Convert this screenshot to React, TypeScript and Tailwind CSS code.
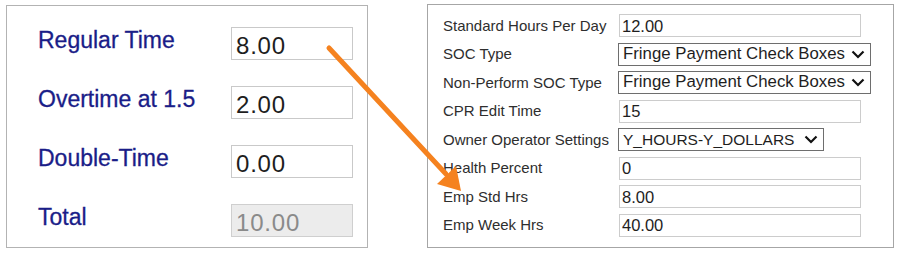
const leftRows = [
  { label: "Regular Time", value: "8.00" },
  { label: "Overtime at 1.5", value: "2.00" },
  { label: "Double-Time", value: "0.00" },
  { label: "Total", value: "10.00", disabled: true },
];

type RightRow = {
  label: string;
  value: string;
  kind: "input" | "select";
  width?: string;
  size?: string;
};

const rightRows: RightRow[] = [
  { label: "Standard Hours Per Day", value: "12.00", kind: "input" },
  { label: "SOC Type", value: "Fringe Payment Check Boxes", kind: "select", width: "w-[253px]", size: "text-[16.8px]" },
  { label: "Non-Perform SOC Type", value: "Fringe Payment Check Boxes", kind: "select", width: "w-[253px]", size: "text-[16.8px]" },
  { label: "CPR Edit Time", value: "15", kind: "input" },
  { label: "Owner Operator Settings", value: "Y_HOURS-Y_DOLLARS", kind: "select", width: "w-[206px]", size: "text-[15.5px]" },
  { label: "Health Percent", value: "0", kind: "input" },
  { label: "Emp Std Hrs", value: "8.00", kind: "input" },
  { label: "Emp Week Hrs", value: "40.00", kind: "input" },
];

const Chevron = () => (
  <svg width="14" height="9" viewBox="0 0 14 9" className="shrink-0">
    <path d="M1.5 1.5 L7 7 L12.5 1.5" fill="none" stroke="#111" strokeWidth="2.2" />
  </svg>
);

export default function App() {
  return (
    <div className="relative flex w-[902px] h-[254px] bg-white font-['Liberation_Sans',Arial,sans-serif]">
      {/* left: time totals */}
      <div className="ml-[6px] mt-[5px] w-[362px] h-[243px] border border-[#b3b3b3] pt-[21px] pl-[31px] flex flex-col gap-[26px]">
        {leftRows.map((r) => (
          <div key={r.label} className="flex items-center h-[33px]">
            <div className="w-[193px] text-[23px] leading-none text-[#1a1d88] -mt-[7px] [-webkit-text-stroke:0.3px_#1a1d88]">
              {r.label}
            </div>
            <div
              className={`w-[122px] h-[33px] border flex items-center pl-[4px] pt-[4px] text-[24px] tracking-[0.8px] leading-none ${
                r.disabled ? "bg-[#ececec] border-[#cfcfcf] text-[#8a8a8a]" : "bg-white border-[#c9c9c9] text-[#1e1e1e]"
              }`}
            >
              {r.value}
            </div>
          </div>
        ))}
      </div>

      {/* right: employee settings */}
      <div className="ml-[59px] mt-[4px] w-[467px] h-[244px] border border-[#a6a6a6] pt-[9px] pl-[15px] flex flex-col gap-[5.5px]">
        {rightRows.map((r) => (
          <div key={r.label} className="flex items-center h-[23px]">
            <div className="w-[176px] text-[15px] leading-none text-[#2e2e2e] -mt-[1px]">{r.label}</div>
            {r.kind === "input" ? (
              <div className="w-[242px] h-[23px] border border-[#cccccc] flex items-center pl-[2px] pt-[1px] text-[16.5px] leading-none text-[#1e1e1e]">
                {r.value}
              </div>
            ) : (
              <div
                className={`${r.width} -ml-px h-[23px] border border-[#6e6e6e] flex items-center justify-between pl-[4px] pr-[5px] ${r.size} leading-none text-[#1e1e1e]`}
              >
                <span className="whitespace-nowrap">{r.value}</span>
                <Chevron />
              </div>
            )}
          </div>
        ))}
      </div>

      {/* orange callout arrow */}
      <svg className="absolute inset-0 pointer-events-none" width="902" height="254" viewBox="0 0 902 254">
        <line x1="329" y1="48" x2="446" y2="174" stroke="#f5821f" strokeWidth="5" strokeLinecap="round" />
        <polygon points="437,184 456,166 461,191" fill="#f5821f" />
      </svg>
    </div>
  );
}
